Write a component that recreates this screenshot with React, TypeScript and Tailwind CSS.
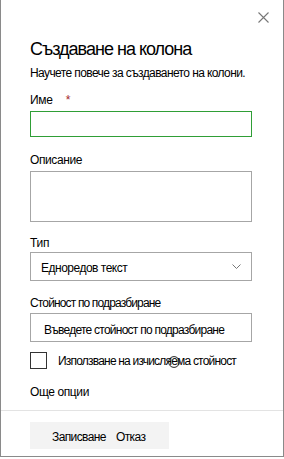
import React from "react";

export default function App() {
  return (
    <div
      className="relative w-[284px] h-[459px] bg-white text-black"
      style={{ fontFamily: '"Liberation Sans", Arial, sans-serif' }}
    >
      <div className="relative h-[457px] border-x border-b border-[#8a8a8a] flex flex-col">
        <button className="absolute top-[12px] right-[14px] w-[11px] h-[11px]" aria-label="Затвори">
          <svg width="11" height="11" viewBox="0 0 11 11">
            <path d="M0.5 0.5 L10.5 10.5 M10.5 0.5 L0.5 10.5" stroke="#777" strokeWidth="1.1" fill="none" />
          </svg>
        </button>

        <div className="px-[29px] flex flex-col">
          <h1 className="mt-[37px] text-[18px] leading-[24px] tracking-[-1px] font-normal">
            Създаване на колона
          </h1>
          <p className="mt-[4px] text-[12px] leading-[16px] tracking-[-0.6px]">
            Научете повече за създаването на колони.
          </p>

          <div className="mt-[11px] text-[12px] leading-[16px] tracking-[-0.3px] flex">
            <span>Име</span>
            <span className="ml-[13px] text-[#a4262c]">*</span>
          </div>
          <div className="mt-[3px] h-[26px] w-[222px] border border-[#2f9e36]" />

          <div className="mt-[15px] text-[12px] leading-[16px] tracking-[-0.4px]">Описание</div>
          <div className="mt-[3px] h-[51px] w-[222px] border border-[#a6a6a6]" />

          <div className="mt-[13px] text-[12px] leading-[16px] tracking-[-0.3px]">Тип</div>
          <div className="mt-[1px] h-[29px] w-[222px] border border-[#a6a6a6] flex items-center justify-between pl-[10px] pr-[10px] pt-[3px]">
            <span className="text-[12px] leading-[16px] tracking-[-0.5px]">Еднoредов текст</span>
            <svg width="9" height="5" viewBox="0 0 9 5" className="mb-[3px]">
              <path d="M0.5 0.5 L4.5 4.5 L8.5 0.5" stroke="#777" strokeWidth="1" fill="none" />
            </svg>
          </div>

          <div className="mt-[14px] text-[12px] leading-[16px] tracking-[-0.85px]">Стойност по подразбиране</div>
          <div className="mt-[2px] h-[29px] w-[222px] border border-[#a6a6a6] flex items-center pl-[13px] pt-[4px]">
            <span className="text-[12px] leading-[16px] tracking-[-0.75px]">Въведете стойност по подразбиране</span>
          </div>

          <div className="mt-[10px] h-[17px] flex items-center">
            <div className="w-[17px] h-[17px] border border-[#333]" />
            <span className="ml-[11px] text-[12px] leading-[16px] tracking-[-0.8px]">
              Използване на изчисляема стойност
            </span>
          </div>

          <div className="mt-[15px] text-[12px] leading-[16px] tracking-[-0.4px]">Още опции</div>
        </div>

        <div className="mt-[10px] h-px w-full bg-[#e3e3e3]" />

        <div className="px-[29px]">
          <div className="mt-[11px] h-[27px] w-[139px] bg-[#f3f3f3] flex items-center pl-[22px] pt-[2px] text-[12px] leading-[16px] tracking-[-0.6px]">
            <span>Записване</span>
            <span className="ml-[10px]">Отказ</span>
          </div>
        </div>
      </div>

      <svg
        className="absolute left-[168px] top-[356px] pointer-events-none"
        width="12"
        height="12"
        viewBox="0 0 12 12"
      >
        <circle cx="6" cy="6" r="5.4" stroke="#222" strokeWidth="1" fill="none" />
      </svg>
    </div>
  );
}
